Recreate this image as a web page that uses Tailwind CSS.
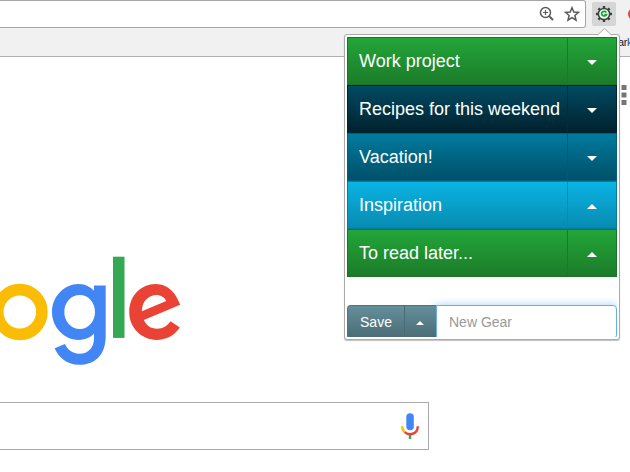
<!DOCTYPE html>
<html lang="en">
<head>
<meta charset="utf-8">
<title>Gears</title>
<script src="https://cdn.jsdelivr.net/npm/@tailwindcss/browser@4"></script>
</head>
<body class="bg-white">
<div class="relative w-[630px] h-[472px] overflow-hidden bg-white font-['Liberation_Sans',Arial,sans-serif]">
  <header class="h-[57px] overflow-hidden bg-[#f1f1f1] border-b border-[#b0b0b0]">
    <div class="flex h-7">
      <div class="flex w-[586px] shrink-0 h-7 items-center justify-end gap-[10px] pr-[5px] bg-white border border-l-0 border-[#a5a5a5] rounded-r-[3px]">
        <svg class="w-4 h-4" viewBox="0 0 16 16" fill="none" stroke="#5a5a5a"><circle cx="7.500" cy="6.500" r="5" stroke-width="1.500"/><path d="M11.100 10.100L15 14" stroke-width="2"/><path d="M5 6.500H10M7.500 4V9" stroke-width="1.200"/></svg>
        <svg class="w-4 h-4" viewBox="0 0 16 16" fill="none" stroke="#5a5a5a" stroke-width="1.500"><path d="M8 1.700L9.800 6L14.500 6.400L10.900 9.500L12 14.100L8 11.600L4 14.100L5.100 9.500L1.500 6.400L6.200 6Z"/></svg>
      </div>
      <div class="flex shrink-0 ml-[6px] mt-[2px] w-6 h-6 items-center justify-center rounded-[2px] bg-[#d5d5d5]">
        <svg class="w-4 h-4" viewBox="0 0 16 16" fill="none"><path stroke="#3a443e" stroke-width="2.400" d="M8 0V3M8 13V16M0 8H3M13 8H16M2.400 2.400L4.400 4.400M11.600 11.600L13.600 13.600M2.400 13.600L4.400 11.600M11.600 4.400L13.600 2.400"/><circle cx="8" cy="8" r="5.600" fill="#f4fff4" stroke="#3a443e" stroke-width="1.500"/><path d="M10.400 6.500A2.600 2.300 0 1 0 10.600 8.500H8.300" stroke="#18a52e" stroke-width="1.700"/></svg>
      </div>
      <div class="ml-[12px] mt-[8px] w-3 h-3 shrink-0 rounded-full bg-[#d5483c]"></div>
    </div>
    <div class="flex h-7 items-center pl-[618px] text-[11px] tracking-[-0.400px] text-[#222]"><span>ar</span><span class="text-[#1754a8]">k</span></div>
  </header>

  <main>
    <div class="flex h-[50px] justify-end pt-[28px] pr-[3px]">
      <svg class="w-[6px] h-[20px] shrink-0" viewBox="0 0 6 20" fill="#757575"><path d="M0.500 0H5.500V5H.5ZM.5 7.500H5.500V12.500H.5ZM.5 15H5.500V20H.5Z"/></svg>
    </div>
    <div class="pt-[143px]">
      <svg class="block w-[190px] h-[120px]" viewBox="0 250 190 120" fill="none">
        <ellipse cx="19.800" cy="312" rx="22.100" ry="22.400" stroke="#fbbc05" stroke-width="11.600"/>
        <path fill="#4285f4" fill-rule="evenodd" d="M94 285.500H105.700V336C105.700 356 94 364.800 79.300 364.800C66 364.800 58 356.500 54.700 348.300L65 344C67 348.700 71.500 353.700 79.300 353.700C88.500 353.700 94 348 94 338V333.600C91 337.200 86 339.900 78.500 339.900C64.500 339.900 52 327.500 52 312C52 296.400 64.500 284 78.500 284C86 284 91 287.500 94 290.800ZM79.800 295C71 295 64.300 302.500 64.300 312C64.300 321.400 71 329 79.800 329C88.500 329 95 321.400 95 312C95 302.500 88.500 295 79.800 295Z"/>
        <rect x="113" y="256.700" width="11.500" height="81.200" fill="#34a853"/>
        <path fill="#ea4335" fill-rule="evenodd" d="M170.500 321.200L179.800 327.500C176.800 332 169.500 339.900 157 339.900C141.500 339.900 129.200 327.800 129.200 312C129.200 295.300 141.500 284 155.500 284C169.500 284 176.500 295.500 178.800 301.600L180.200 304.700L143.800 320C146.500 325.500 150.800 328.700 157 328.700C163.200 328.700 167.500 325.600 170.500 321.200ZM141.900 311.200L166.200 301C164.900 297.500 160.900 295 156.200 295C150.200 295 141.500 300.500 141.900 311.200Z"/>
      </svg>
    </div>
    <div class="mt-[32px] w-[429px] h-[48px] flex items-center justify-end pr-[9px] border border-l-0 border-[#aaa]">
      <svg class="w-[18px] h-[26px]" viewBox="0 0 18 26" fill="none"><rect x="5.300" y="0.200" width="7.500" height="17" rx="3.750" fill="#4285f4"/><path d="M9 20.500V26" stroke="#34a853" stroke-width="2.400"/><path d="M1.200 13.200C1.200 16 2.300 18 3.700 19.200" stroke="#fbbc05" stroke-width="2.400"/><path d="M3.700 19.200C7.500 23 16.800 21.500 16.800 13.200" stroke="#ea4335" stroke-width="2.400"/></svg>
    </div>
  </main>

  <section class="absolute left-[344px] top-[34px] w-[276px] h-[306px] rounded-[3px] border border-[#aaa] bg-white p-[2px] pr-[1px] shadow-[0_1px_1px_rgba(0,0,0,.25)] text-white">
    <svg class="absolute left-[252px] top-[-7px] w-[15px] h-[8px]" viewBox="0 0 15 8"><path d="M.5 7L7.500 0.500L14.500 7V8H.5Z" fill="#fff"/><path d="M.5 7L7.500 .5L14.500 7" fill="none" stroke="#aaa"/></svg>
    <div class="w-[270px] text-[18px] leading-[46px]">
      <div class="flex h-12 bg-linear-to-b from-[#23a638] to-[#1b7c2a] border border-[#187527]"><span class="w-[220px] pl-[11px] whitespace-nowrap border-r border-[#187b2a]">Work project</span><span class="flex flex-1 items-center justify-center"><svg class="w-[10px] h-[5px] mt-[3px]" viewBox="0 0 10 5" fill="#fff"><path d="M0 0H10L5 5Z"/></svg></span></div>
      <div class="flex h-12 bg-linear-to-b from-[#004b64] to-[#00222e] border border-[#00222e]"><span class="w-[220px] pl-[11px] whitespace-nowrap border-r border-[#002d3c]">Recipes for this weekend</span><span class="flex flex-1 items-center justify-center"><svg class="w-[10px] h-[5px] mt-[3px]" viewBox="0 0 10 5" fill="#fff"><path d="M0 0H10L5 5Z"/></svg></span></div>
      <div class="flex h-12 bg-linear-to-b from-[#007ba0] to-[#005068] border border-[#005e79]"><span class="w-[220px] pl-[11px] whitespace-nowrap border-r border-[#005b75]">Vacation!</span><span class="flex flex-1 items-center justify-center"><svg class="w-[10px] h-[5px] mt-[3px]" viewBox="0 0 10 5" fill="#fff"><path d="M0 0H10L5 5Z"/></svg></span></div>
      <div class="flex h-12 bg-linear-to-b from-[#0ab4e4] to-[#078bb0] border border-[#077d9e]"><span class="w-[220px] pl-[11px] whitespace-nowrap border-r border-[#078bb0]">Inspiration</span><span class="flex flex-1 items-center justify-center"><svg class="w-[10px] h-[5px] mt-[3px]" viewBox="0 0 10 5" fill="#fff"><path d="M0 5H10L5 0Z"/></svg></span></div>
      <div class="flex h-12 bg-linear-to-b from-[#23a638] to-[#1b7c2a] border border-[#187527]"><span class="w-[220px] pl-[11px] whitespace-nowrap border-r border-[#187b2a]">To read later...</span><span class="flex flex-1 items-center justify-center"><svg class="w-[10px] h-[5px] mt-[3px]" viewBox="0 0 10 5" fill="#fff"><path d="M0 5H10L5 0Z"/></svg></span></div>
    </div>
    <div class="mt-[20px] pt-2 w-[270px] h-[40px] overflow-hidden">
      <div class="flex h-[34px] text-[14px] leading-[32px]">
        <div class="relative z-10 flex w-[89px] rounded-l-[4px] bg-linear-to-b from-[#638f9b] to-[#4b6c76] border border-r-0 border-[#4f727c]">
          <span class="w-[57px] text-center border-r border-[#4a6b74]">Save</span>
          <span class="flex flex-1 items-center justify-center"><svg class="w-2 h-1 mt-[2px] mr-px" viewBox="0 0 8 4" fill="#fff"><path d="M0 4H8L4 0Z"/></svg></span>
        </div>
        <div class="flex-1 pl-[12px] bg-white border border-[#66afe9] rounded-r-[4px] text-[#999] shadow-[0_0_8px_rgba(102,175,233,.6)]">New Gear</div>
      </div>
    </div>
  </section>
</div>
</body>
</html>
